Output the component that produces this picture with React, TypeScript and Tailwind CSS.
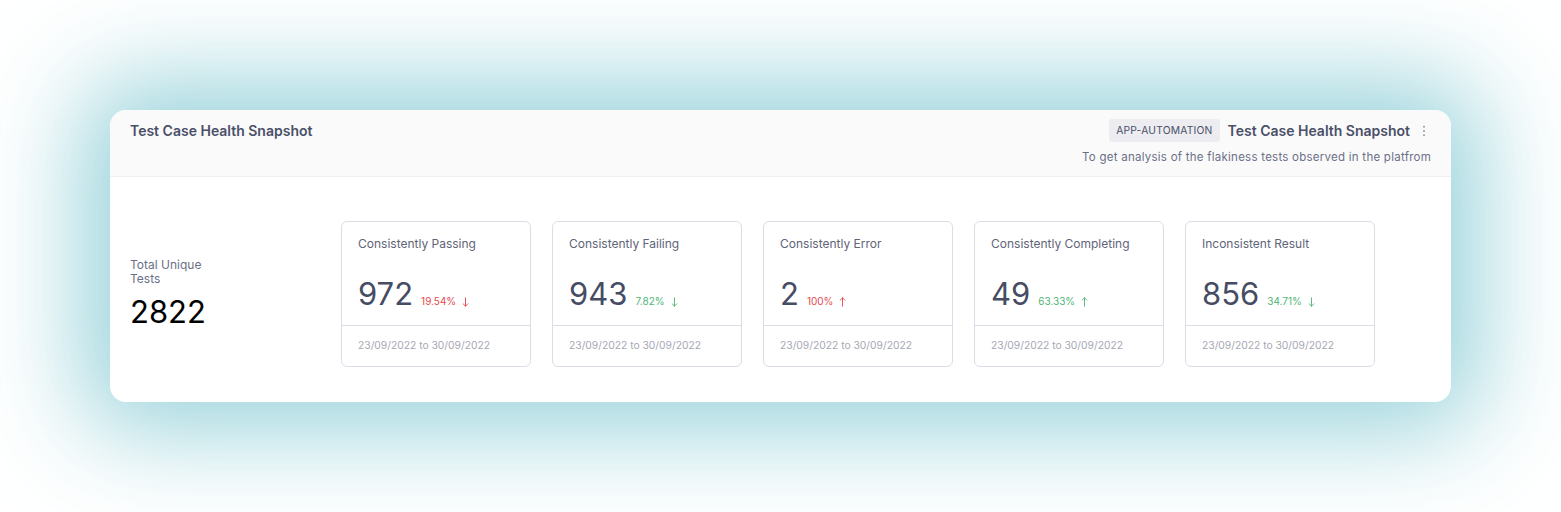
import React from 'react';

type Stat = {
  title: string;
  value: string;
  change: string;
  dir: 'up' | 'down';
  tone: 'red' | 'green';
};

const stats: Stat[] = [
  { title: 'Consistently Passing', value: '972', change: '19.54%', dir: 'down', tone: 'red' },
  { title: 'Consistently Failing', value: '943', change: '7.82%', dir: 'down', tone: 'green' },
  { title: 'Consistently Error', value: '2', change: '100%', dir: 'up', tone: 'red' },
  { title: 'Consistently Completing', value: '49', change: '63.33%', dir: 'up', tone: 'green' },
  { title: 'Inconsistent Result', value: '856', change: '34.71%', dir: 'down', tone: 'green' },
];

const Arrow: React.FC<{ dir: 'up' | 'down' }> = ({ dir }) => (
  <svg viewBox="0 0 8 12" className="w-[7px] h-[10px]" fill="none" stroke="currentColor" strokeWidth={1.1} strokeLinecap="round" strokeLinejoin="round">
    {dir === 'down' ? (
      <path d="M4 1v10M1.2 8.2 4 11l2.8-2.8" />
    ) : (
      <path d="M4 11V1M1.2 3.8 4 1l2.8 2.8" />
    )}
  </svg>
);

const KebabIcon = () => (
  <svg viewBox="0 0 4 14" className="w-[4px] h-[12px]" fill="currentColor">
    <circle cx="2" cy="2" r="1.1" />
    <circle cx="2" cy="7" r="1.1" />
    <circle cx="2" cy="12" r="1.1" />
  </svg>
);

const StatCard: React.FC<{ stat: Stat }> = ({ stat }) => {
  const toneClass = stat.tone === 'red' ? 'text-[#e5484d]' : 'text-[#4fb676]';
  return (
    <div className="w-[190px] h-[146px] border border-[#dcdce6] rounded-[6px] flex flex-col bg-white">
      <div className="flex-1 px-[16px] pt-[14px]">
        <div className="text-[12px] leading-[16px] text-[#5f6478]">{stat.title}</div>
        <div className="flex items-baseline mt-[24px]">
          <span className="text-[31px] leading-[36px] text-[#464c63]">{stat.value}</span>
          <span className={`ml-[8px] text-[10px] flex items-center gap-[6px] ${toneClass}`}>
            {stat.change}
            <Arrow dir={stat.dir} />
          </span>
        </div>
      </div>
      <div className="h-[41px] border-t border-[#dcdce6] px-[16px] flex items-center text-[10.3px] text-[#a6a8b3]">
        23/09/2022 to 30/09/2022
      </div>
    </div>
  );
};

export default function App() {
  return (
    <div className="w-[1561px] h-[512px] bg-white flex items-start justify-center pt-[110px]" style={{ fontFamily: 'Inter, "Noto Sans", sans-serif' }}>
      <div className="w-[1341px] h-[292px] rounded-[16px] bg-white overflow-hidden shadow-[0_0_100px_28px_rgba(140,205,214,0.9)] flex flex-col">
        <div className="h-[67px] bg-[#fafafa] border-b border-[#efeff4] px-[20px] flex justify-between">
          <div className="pt-[11px] text-[14px] leading-[20px] font-semibold text-[#4a5068]">Test Case Health Snapshot</div>
          <div className="pt-[9px] flex flex-col items-end">
            <div className="flex items-center">
              <span className="bg-[#ececf1] rounded-[3px] px-[7px] h-[23px] flex items-center text-[10.3px] text-[#4a5068] tracking-[0.2px]">APP-AUTOMATION</span>
              <span className="ml-[8px] text-[14px] font-semibold text-[#4a5068]">Test Case Health Snapshot</span>
              <span className="ml-[12px] mr-[5px] text-[#8b8fa0] flex items-center"><KebabIcon /></span>
            </div>
            <div className="mt-[7px] text-[11.5px] tracking-[0.25px] text-[#6b7088]">To get analysis of the flakiness tests observed in the platfrom</div>
          </div>
        </div>
        <div className="flex-1 flex items-start pt-[44px]">
          <div className="w-[231px] pl-[20px] pt-[37px]">
            <div className="w-[90px] text-[12px] leading-[14px] text-[#6b7088]">Total Unique Tests</div>
            <div className="mt-[8px] text-[31px] leading-[36px] text-black">2822</div>
          </div>
          <div className="flex gap-[21px]">
            {stats.map((s) => (
              <StatCard key={s.title} stat={s} />
            ))}
          </div>
        </div>
      </div>
    </div>
  );
}
